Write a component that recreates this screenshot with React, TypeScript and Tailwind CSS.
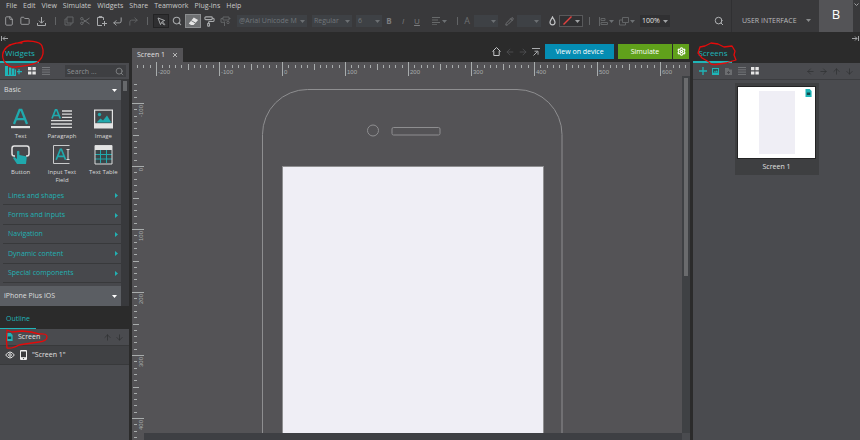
import { useLayoutEffect, useRef, useState } from "react";
import type { ReactNode } from "react";
import {
  ArrowDown,
  ArrowLeft,
  ArrowRight,
  ArrowUp,
  CornerDownLeft,
  CornerUpRight,
  File,
  Folder,
  PaintRoller,
  Pencil,
  Search,
  Settings,
} from "lucide-react";

const TEAL = "#1fb5b8";

function Tool({ label, className = "w-4 text-[#a9abad]", children }: { label: string; className?: string; children: ReactNode }) {
  return (
    <button type="button" aria-label={label} className={`flex h-[14px] shrink-0 items-center justify-center ${className}`}>
      {children}
    </button>
  );
}

function Divider({ className = "w-3" }: { className?: string }) {
  return (
    <span className={`flex shrink-0 justify-center ${className}`}>
      <span className="h-2 w-px bg-[#626466]" />
    </span>
  );
}

function Caret({ className = "text-[#6c7073]" }: { className?: string }) {
  return (
    <svg width="5" height="3" viewBox="0 0 5 3" className={`shrink-0 ${className}`}>
      <path d="M0 0h5L2.5 3z" fill="currentColor" />
    </svg>
  );
}

function Picker({ label, value, className, caret }: { label: string; value: string; className: string; caret?: string }) {
  return (
    <span className={`relative flex h-3 shrink-0 items-center ${className}`}>
      <select aria-label={label} className="h-3 w-full appearance-none bg-transparent pl-0.5 text-[7px] leading-3 outline-none">
        <option>{value}</option>
      </select>
      <span className="pointer-events-none absolute inset-y-0 right-[2px] flex items-center">
        <Caret className={caret} />
      </span>
    </span>
  );
}

function CopyIcon() {
  return (
    <svg width="10" height="10" viewBox="0 0 10 10" fill="none" stroke="currentColor">
      <path d="M3 1h6v6H3zM3 3H1v6h6V7" />
    </svg>
  );
}

function LinesIcon() {
  return (
    <svg width="8" height="8" viewBox="0 0 8 8" stroke="currentColor">
      <path d="M0 .5h8M0 2.8h8M0 5.1h8M0 7.4h8" strokeWidth=".9" />
    </svg>
  );
}

function GridIcon() {
  return (
    <svg width="8" height="8" viewBox="0 0 8 8" fill="currentColor">
      <path d="M0 0h3.4v3.2H0zM4.4 0h3.4v3.2H4.4zM0 4.4h3.4v3.2H0zM4.4 4.4h3.4v3.2H4.4z" />
    </svg>
  );
}

function ScreenFileIcon() {
  return (
    <svg width="7" height="8" viewBox="0 0 7 8">
      <path d="M.5 0h4.2L6.6 2v6H.5z" fill={TEAL} />
      <path d="M1.8 3.5h3.4V6H1.8z" fill="#15494c" />
    </svg>
  );
}

const menus = ["File", "Edit", "View", "Simulate", "Widgets", "Share", "Teamwork", "Plug-ins", "Help"];

function Header() {
  return (
    <header className="flex h-8 shrink-0 bg-[#39393b]">
      <div className="min-w-0 flex-1">
        <nav className="flex h-3 items-center gap-1.5 pl-1.5 leading-3 text-[#c9c9c9]">
          {menus.map((m) => (
            <button key={m} type="button">
              {m}
            </button>
          ))}
        </nav>
        <div className="flex h-[18px] items-center pl-px">
          <Tool label="New"><File size={10} /></Tool>
          <Tool label="Open"><Folder size={10} /></Tool>
          <Tool label="Save">
            <svg width="9" height="9" viewBox="0 0 9 9" fill="none" stroke="currentColor">
              <path d="M4.5 0v6M2 3.7l2.5 2.5L7 3.7M.5 6v2.5h8V6" />
            </svg>
          </Tool>
          <Divider />
          <Tool label="Copy" className="w-4 text-[#626466]"><CopyIcon /></Tool>
          <Tool label="Cut" className="w-4 text-[#6c6e70]">
            <svg width="10" height="8" viewBox="0 0 10 8" fill="none" stroke="currentColor">
              <path d="M9.500 1L3 5.500M9.500 7L3 2.500" />
              <circle cx="1.800" cy="1.700" r="1.200" />
              <circle cx="1.800" cy="6.300" r="1.200" />
            </svg>
          </Tool>
          <Tool label="Paste">
            <svg width="11" height="10" viewBox="0 0 11 10" fill="none" stroke="currentColor">
              <path d="M7.5 4V1.5h-6v8H6M3 1.5V.6h3v.9M8.5 5v5M6 7.5h5" />
            </svg>
          </Tool>
          <Tool label="Undo"><CornerDownLeft size={11} /></Tool>
          <Tool label="Redo" className="w-4 text-[#626466]"><CornerUpRight size={11} /></Tool>
          <Divider />
          <Tool label="Select" className="w-4 border border-[#232324] bg-[#2f2f31] text-[#a9abad]">
            <svg width="9" height="9" viewBox="0 0 9 9" fill="none" stroke="currentColor">
              <path d="M1 1l6.6 2.5-2.4 1L7.8 7.500 7.200 8 4.700 5.300 3.500 7.600z" />
            </svg>
          </Tool>
          <Tool label="Zoom"><Search size={10} strokeWidth={2.5} /></Tool>
          <Tool label="Eraser" className="w-4 border border-[#8b8d8f] bg-[#6e7072]">
            <svg width="11" height="9" viewBox="0 0 11 9">
              <path d="M5.800.5l4.300 2.600-4.500 5H3L.8 6.500z" fill="#e6e6e6" />
              <path d="M3.200 3.600l4.400 2.500" stroke="#77797b" />
            </svg>
          </Tool>
          <Tool label="Copy style"><PaintRoller size={11} strokeWidth={2.4} /></Tool>
          <Tool label="Paste style" className="w-4 text-[#626466]">
            <svg width="11" height="11" viewBox="0 0 11 11" fill="none" stroke="currentColor">
              <path d="M3 1h6v3H3zM3 2.500H1v3.800h3.500M9 2.500h1.500M4.500 5.500v4.500" />
              <circle cx="8" cy="6.500" r="1.200" />
            </svg>
          </Tool>
          <Picker label="Font" value="@Arial Unicode M" className="ml-1 w-[70px] bg-[#3e4145] text-[#72777b]" />
          <Picker label="Font style" value="Regular" className="ml-[5px] w-10 bg-[#3e4145] text-[#72777b]" />
          <Picker label="Font size" value="6" className="ml-1 w-[26px] bg-[#3e4145] text-[#72777b]" />
          <Tool label="Bold" className="w-[14px] text-[8px] font-bold text-[#7b7d7f]">B</Tool>
          <Tool label="Italic" className="w-[14px] text-[8px] italic text-[#7b7d7f]">I</Tool>
          <Tool label="Underline" className="w-[14px] text-[8px] underline text-[#7b7d7f]">U</Tool>
          <Tool label="Align text" className="ml-[7px] w-4 gap-0.5 text-[#6d6f71]">
            <svg width="8" height="8" viewBox="0 0 8 8" stroke="currentColor"><path d="M0 .5h8M0 3h6M0 5.500h8M0 7.800h5" strokeWidth=".9" /></svg>
            <Caret />
          </Tool>
          <Divider className="ml-[5px] w-[10px]" />
          <Tool label="Text colour" className="w-[10px] text-[9px] text-[#6d6f71]">A</Tool>
          <Picker label="Text colour value" value="" className="ml-0.5 w-6 bg-[#3e4145]" />
          <Tool label="Line colour" className="ml-1 w-[14px] text-[#737577]"><Pencil size={9} strokeWidth={2.5} /></Tool>
          <Picker label="Line colour value" value="" className="ml-px w-6 bg-[#3e4145]" />
          <Tool label="Fill colour" className="ml-1 w-[14px] text-[#c2c4c6]">
            <svg width="7" height="10" viewBox="0 0 7 10" fill="none" stroke="currentColor" strokeWidth="1.200">
              <path d="M3.500 1C2.500 3.200 1 4.500 1 6.300a2.500 2.500 0 0 0 5 0C6 4.500 4.500 3.200 3.500 1z" />
            </svg>
          </Tool>
          <span className="relative flex shrink-0">
            <Picker label="Fill colour value" value="" className="w-6 border border-[#58595b] bg-[#303032]" caret="text-[#a0a2a4]" />
            <svg width="9" height="9" viewBox="0 0 9 9" className="pointer-events-none absolute left-[4px] top-[1px]">
              <path d="M.5 8.500l8-8" stroke="#e2413f" strokeWidth="1.400" />
            </svg>
          </span>
          <Divider />
          <Tool label="Align" className="ml-0.5 w-[18px] gap-px text-[#626466]">
            <svg width="9" height="9" viewBox="0 0 9 9" fill="none" stroke="currentColor"><path d="M.5 0v9M2 1.500h4v2H2zM2 5.500h6.500v2H2z" /></svg>
            <Caret />
          </Tool>
          <Tool label="Arrange" className="ml-1 w-4 gap-px text-[#626466]">
            <svg width="10" height="9" viewBox="0 0 10 9" fill="none" stroke="currentColor"><path d="M3.500.5h6v5h-6zM3.500 3h-3v5h6V5.500" /></svg>
            <Caret />
          </Tool>
          <Picker label="Zoom level" value="100%" className="ml-[5px] w-[30px] bg-[#303032] text-[#e4e4e4]" caret="text-[#a0a2a4]" />
          <span className="flex-1" />
          <Tool label="Search" className="mr-1 w-4 text-[#b0b2b4]"><Search size={10} strokeWidth={2.4} /></Tool>
        </div>
      </div>
      <button type="button" className="flex w-[88px] shrink-0 items-center justify-between border-l border-[#303032] pl-[10px] pr-2 pt-[9px] text-[#b9bbbd]">
        USER INTERFACE
        <Caret className="text-[#8a8c8e]" />
      </button>
      <button type="button" className="w-[34px] shrink-0 bg-[#545457] pb-1 text-[13px] text-white">B</button>
      <button type="button" aria-label="More" className="flex w-[7px] shrink-0 justify-center pt-[3px] text-[#a0a2a4]">
        <svg width="5" height="4" viewBox="0 0 5 4" fill="none" stroke="currentColor"><path d="M.5.5l2 2 2-2" /></svg>
      </button>
    </header>
  );
}

function Scribble({ d, className }: { d: string; className: string }) {
  return (
    <svg width="50" height="30" viewBox="0 0 50 30" className={`pointer-events-none absolute z-10 ${className}`}>
      <path d={d} fill="none" stroke="#e30b0b" strokeWidth="1.300" strokeLinejoin="round" strokeLinecap="round" />
    </svg>
  );
}

const widgetIcons: { label: string; art: ReactNode }[] = [
  {
    label: "Text",
    art: (
      <>
        <path d="M4 16L9.600 1.800h1.800L17 16M6 11.200h9" fill="none" stroke="#20a9ad" strokeWidth="2.300" />
        <path d="M1 18h19v2.200H1z" fill="#e3e3e3" />
      </>
    ),
  },
  {
    label: "Paragraph",
    art: (
      <>
        <path d="M1 10.500L4.500 1.800h1.200L9.200 10.500M2.500 7.500h5.200" fill="none" stroke="#20a9ad" strokeWidth="1.700" />
        <path d="M11 3h10M11 6.200h10M11 9.400h10M0 12.700h21M0 16h21M0 19.300h21" stroke="#dadada" strokeWidth="1.300" />
      </>
    ),
  },
  {
    label: "Image",
    art: (
      <>
        <path d="M1 1.500h19v19H1z" fill="#e3e3e3" />
        <path d="M2.200 2.700h16.600v12.500H2.200z" fill="#444649" />
        <path d="M3.500 14.500l4-4 2.500 2 4-5 4.300 7z" fill="#20a9ad" />
        <circle cx="6.500" cy="6.500" r="1.700" fill="#20a9ad" />
      </>
    ),
  },
  {
    label: "Button",
    art: (
      <>
        <path d="M5 12H4.200Q2 12 2 9.700V4.300Q2 2 4.200 2h12.600Q19 2 19 4.300v5.400q0 2.300-2.200 2.300H16" fill="none" stroke="#e3e3e3" strokeWidth="1.500" />
        <path d="M7 20l-4-6 1.200-1L7 15V7.500q1.200-1.600 2.400 0V11l6.300 1.200q1.100.3 1 1.500L16 20z" fill="#20a9ad" />
      </>
    ),
  },
  {
    label: "Input Text Field",
    art: (
      <>
        <path d="M18.500 1.500h-16v18h16" fill="none" stroke="#c9cacb" />
        <path d="M5.200 15.800L9.400 5.300h1l4.200 10.500M7 12.300h6" fill="none" stroke="#20a9ad" strokeWidth="1.700" />
        <path d="M15.500 5.500h3M15.500 15.500h3M17 5.500v10" stroke="#dadada" />
      </>
    ),
  },
  {
    label: "Text Table",
    art: (
      <>
        <path d="M2 6h17v13.500H2z" fill="#3a4548" />
        <path d="M7.500 6v13M13.500 6v13M2 10.500h17M2 15h17" stroke="#20a9ad" />
        <path d="M2 1.500h17V20H2z" fill="none" stroke="#dadada" />
        <path d="M2 2h17v4H2z" fill="#e3e3e3" />
      </>
    ),
  },
];

const categories = ["Lines and shapes", "Forms and inputs", "Navigation", "Dynamic content", "Special components"];

function SectionBar({ title, className = "" }: { title: string; className?: string }) {
  return (
    <button type="button" className={`flex h-5 w-full items-center justify-between bg-[#5b5e63] pl-1 pr-1 text-[#dededf] ${className}`}>
      {title}
      <Caret className="text-white" />
    </button>
  );
}

function LeftPanel() {
  return (
    <aside className="mr-[3px] flex w-[129px] shrink-0 flex-col">
      <div className="relative flex h-[19px] shrink-0">
        <button type="button" className="w-[39px] border-b-2 border-[#1fb5b8] pl-px text-[8px] text-[#1fb5b8]">Widgets</button>
        <Scribble className="-top-[5px] left-0" d="M22 4C16 3 8 6 5 10S2 18 4 22s7 7 12 6 18-1 23-6 5-10 3-15S27 1 21 3s-9 2-12 3" />
      </div>
      <div className="flex h-[17px] shrink-0 items-center border-b border-[#38393b] bg-[#4a4b4f]">
        <Tool label="Add library" className="ml-1 w-[18px]">
          <svg width="17" height="10" viewBox="0 0 17 10" fill={TEAL}>
            <path d="M0 0h3v10H0zM4 1.500h2.400V10H4zM7 2.500h2.400V10H7zM10 3.500h1V10h-1zM0 8.800h11V10H0zM13.400 3h1.200v2H17v1.200h-2.400v2h-1.200v-2H12V5h1.400z" />
          </svg>
        </Tool>
        <Tool label="Icon view" className="ml-0.5 w-4 text-[#e6e6e6]"><GridIcon /></Tool>
        <Tool label="List view" className="w-3 text-[#7b7d80]"><LinesIcon /></Tool>
        <label className="ml-auto mr-[3px] flex h-3 w-[61px] items-center bg-[#3e3f42] px-0.5 text-[#8f9193]">
          <input aria-label="Search widgets" placeholder="Search ..." className="h-3 w-full min-w-0 bg-transparent text-[7px] outline-none placeholder:text-[#8f9193]" />
          <Search size={9} className="shrink-0" />
        </label>
      </div>
      <div className="flex shrink-0 border-b border-[#2b2b2b] bg-[#38393c]">
        <div className="min-w-0 flex-1 bg-[#47484c]">
          <SectionBar title="Basic" />
          <div className="-mr-[3px] grid grid-cols-3 gap-y-1 pt-2">
            {widgetIcons.map((w) => (
              <button key={w.label} type="button" className="flex flex-col items-center gap-0.5 text-[6px] leading-[8px] text-[#dadada]">
                <svg width="21" height="22" viewBox="0 0 21 22">{w.art}</svg>
                <span className="w-9">{w.label}</span>
              </button>
            ))}
          </div>
          <div className="mt-0.5 grid h-[97px] grid-rows-5 pl-[3px] text-[#22b1b3]">
            {categories.map((c) => (
              <button key={c} type="button" className="flex items-center justify-between border-b border-[#38393b] pl-[5px] pr-[3px] pt-px">
                {c}
                <svg width="3" height="5" viewBox="0 0 3 5"><path d="M0 0l3 2.500L0 5z" fill="currentColor" /></svg>
              </button>
            ))}
          </div>
          <SectionBar title="iPhone Plus iOS" className="mt-[3px]" />
        </div>
        <div className="w-2 px-[2px] pt-px">
          <div className="h-[10px] bg-[#66686b]" />
        </div>
      </div>
      <div className="flex h-[22px] shrink-0">
        <button type="button" className="w-9 border-b border-[#1fb5b8] pt-0.5 text-[#1fb5b8]">Outline</button>
      </div>
      <div className="flex-1 bg-[#4a4b4f] text-[#e0e0e0]">
        <div className="relative flex h-[17px] items-center border-b border-[#38393b] pl-1.5 pr-1">
          <ScreenFileIcon />
          <span className="ml-[5px] flex-1">Screen</span>
          <Tool label="Move up" className="w-3 text-[#2f3032]"><ArrowUp size={9} /></Tool>
          <Tool label="Move down" className="w-3 text-[#2f3032]"><ArrowDown size={9} /></Tool>
          <Scribble className="left-0 top-0" d="M7 1l5 2 10-1 9 1 8 2q8-1 8 3 0 4-8 5l-14 2-6 1q-7 4-12 3-1-8 0-18" />
        </div>
        <div className="flex h-[19px] items-center border-b border-[#38393b] bg-[#404144] pl-[5px]">
          <Tool label="Toggle visibility" className="w-[10px]">
            <svg width="10" height="8" viewBox="0 0 10 8" fill="none" stroke="#e6e6e6">
              <path d="M.7 4Q5-2 9.300 4 5 10 .7 4z" />
              <circle cx="5" cy="4" r="1.300" />
            </svg>
          </Tool>
          <svg width="7" height="10" viewBox="0 0 7 10" className="ml-[5px]">
            <rect width="7" height="10" rx="1" fill="#f0f0f0" />
            <path d="M1 1.500h5v5.700H1z" fill="#3b3c3e" />
            <circle cx="3.500" cy="8.600" r=".7" fill="#3b3c3e" />
          </svg>
          <span className="ml-[5px]">"Screen 1"</span>
        </div>
      </div>
    </aside>
  );
}

const STEP = 6.3;
const rulerColor = "#a8acac";

function tickSpan(n: number) {
  if (n % 10 === 0) return [0, 14];
  if (n % 5 === 0) return [2, 8];
  return [3, 6];
}

function useSize() {
  const ref = useRef<SVGSVGElement>(null);
  const [size, setSize] = useState({ width: 0, height: 0 });
  useLayoutEffect(() => {
    const el = ref.current;
    if (!el) return;
    const measure = () => {
      const box = el.getBoundingClientRect();
      setSize({ width: box.width, height: box.height });
    };
    measure();
    const observer = new ResizeObserver(measure);
    observer.observe(el);
    return () => observer.disconnect();
  }, []);
  return { ref, size };
}

function marks(origin: number, length: number) {
  const first = Math.ceil((3 - origin) / STEP);
  const last = Math.floor((length - 3 - origin) / STEP);
  return Array.from({ length: Math.max(0, last - first + 1) }, (_, i) => {
    const n = first + i;
    return { n, at: Math.round(origin + n * STEP) };
  });
}

function TopRuler() {
  const { ref, size } = useSize();
  const ticks = marks(150, size.width);
  return (
    <svg ref={ref} className="h-[14px] w-full shrink-0" fontFamily="Liberation Sans, sans-serif" fontSize="6" fill={rulerColor}>
      {ticks.map(({ n, at }) => {
        const [a, b] = tickSpan(n);
        return <rect key={n} x={at} y={a} width="1" height={b - a} />;
      })}
      {ticks.filter(({ n, at }) => n % 10 === 0 && at < size.width - 14).map(({ n, at }) => (
        <text key={n} x={at + 2} y="12">{n * 10}</text>
      ))}
    </svg>
  );
}

function SideRuler() {
  const { ref, size } = useSize();
  const ticks = marks(90, size.height);
  return (
    <svg ref={ref} className="h-full w-3 shrink-0" fontFamily="Liberation Sans, sans-serif" fontSize="6" fill={rulerColor}>
      {ticks.map(({ n, at }) => {
        const [a, b] = tickSpan(n);
        return <rect key={n} x={a === 0 ? 0 : a - 1} y={at} width={b - a} height="1" />;
      })}
      {ticks.filter(({ n, at }) => n % 10 === 0 && at < size.height - 13).map(({ n, at }) => (
        <text key={n} textAnchor="end" transform={`translate(11 ${at + 2}) rotate(-90)`}>{n * 10}</text>
      ))}
    </svg>
  );
}

function Editor() {
  return (
    <main className="flex min-w-0 flex-1 flex-col">
      <div className="flex h-[18px] shrink-0 items-start">
        <div className="mt-1 flex h-[14px] w-[51px] items-center justify-between bg-[#545356] pl-[5px] pr-1.5 text-[#e0e0e0]">
          <span className="whitespace-nowrap">Screen 1</span>
          <button type="button" aria-label="Close tab">
            <svg width="4" height="4" viewBox="0 0 4 4" stroke="#b5b5b5"><path d="M0 0l4 4M4 0L0 4" /></svg>
          </button>
        </div>
        <div className="ml-auto flex items-center text-[#4f5153]">
          <Tool label="Home" className="w-[13px] text-[#c2c4c6]">
            <svg width="9" height="9" viewBox="0 0 9 9" fill="none" stroke="currentColor"><path d="M.5 4.500l4-4 4 4M1.800 4v4.500h5.400V4" /></svg>
          </Tool>
          <Tool label="Back" className="w-[13px]"><ArrowLeft size={10} /></Tool>
          <Tool label="Forward" className="w-[13px]"><ArrowRight size={10} /></Tool>
          <Tool label="Go to top" className="w-[14px] text-[#a9abad]">
            <svg width="8" height="8" viewBox="0 0 8 8" fill="none" stroke="currentColor"><path d="M0 .5h8M1.500 7.500l4-4M2.500 3.200h3.500v3.500" /></svg>
          </Tool>
          <button type="button" className="ml-0.5 h-[15px] w-[69px] bg-[#058db3] text-white">View on device</button>
          <button type="button" className="ml-1 h-[15px] w-[54px] bg-[#60a11b] text-white">Simulate</button>
          <button type="button" aria-label="Simulation settings" className="ml-px mr-px flex h-[15px] w-4 items-center justify-center bg-[#60a11b] text-white">
            <Settings size={9} strokeWidth={3} />
          </button>
        </div>
      </div>
      <div className="flex min-h-0 flex-1 flex-col bg-[#545356]">
        <TopRuler />
        <div className="flex min-h-0 flex-1">
          <SideRuler />
          <div className="flex min-w-0 flex-1 flex-col">
            <svg className="min-h-0 w-full flex-1" fill="none" stroke="#8e8e90">
              <rect x="118.500" y="13.500" width="299.500" height="620" rx="45" />
              <circle cx="229" cy="54.500" r="5.500" />
              <rect x="248" y="51.500" width="48" height="7.500" rx="1.500" />
              <rect x="138.500" y="90.500" width="261" height="464" fill="#efeef5" />
            </svg>
            <div className="h-[7px] shrink-0 bg-[#3e3f43]" />
          </div>
          <div className="flex w-2 flex-col bg-[#3f4144]">
            <div className="flex-1 px-[2px] pt-0.5">
              <div className="h-[198px] bg-[#6a6b6d]" />
            </div>
            <div className="h-[7px] bg-[#4a4b4f]" />
          </div>
        </div>
      </div>
    </main>
  );
}

function RightPanel() {
  return (
    <aside className="ml-[3px] flex w-[167px] shrink-0 flex-col">
      <div className="relative flex h-[19px] shrink-0">
        <button type="button" className="w-[39px] border-b-2 border-[#1fb5b8] pl-px text-[8px] text-[#1fb5b8]">Screens</button>
        <Scribble className="-top-[3px] left-0" d="M6 9l1-3 5-1 6-3 7 1 6 3 8-1 3 5-1 4 2 5-7 2-3 1-7 1q-8 2-10-2l-7-4-4-5 1-3" />
      </div>
      <div className="flex h-[17px] shrink-0 items-center border-b border-[#3c3d40] bg-[#4a4b4f] pl-[3px] pr-1 text-[#303133]">
        <Tool label="Add screen" className="w-[13px]">
          <svg width="8" height="8" viewBox="0 0 8 8" stroke={TEAL} strokeWidth="1.300"><path d="M4 0v8M0 4h8" /></svg>
        </Tool>
        <Tool label="Add image screen" className="w-[13px]">
          <svg width="7" height="7" viewBox="0 0 7 7">
            <path d="M0 0h7v7H0z" fill={TEAL} />
            <path d="M1 1h5v3.800H1z" fill="#2a5557" />
            <path d="M1.300 4.600l1.500-1.700 1 .9 1-1.500 1.200 2.300z" fill={TEAL} />
          </svg>
        </Tool>
        <Tool label="Add folder" className="w-[13px] text-[#6b6d70]">
          <svg width="7" height="7" viewBox="0 0 7 7"><path d="M0 0h3.500l1 1.500H7V7H0z" fill="currentColor" /><path d="M3.500 3v3M2 4.500h3" stroke="#4a4b4f" /></svg>
        </Tool>
        <Tool label="List view" className="w-[13px] text-[#77797c]"><LinesIcon /></Tool>
        <Tool label="Grid view" className="w-[14px] text-[#e6e6e6]"><GridIcon /></Tool>
        <span className="flex-1" />
        <Tool label="Move left" className="w-[13px]"><ArrowLeft size={9} /></Tool>
        <Tool label="Move right" className="w-[13px]"><ArrowRight size={9} /></Tool>
        <Tool label="Move up" className="w-[13px]"><ArrowUp size={9} /></Tool>
        <Tool label="Move down" className="w-[13px]"><ArrowDown size={9} /></Tool>
      </div>
      <div className="flex flex-1 items-start justify-center bg-[#4a4b4f] pt-[3px]">
        <button type="button" className="flex w-[84px] flex-col items-center bg-[#3e3f41] pt-[3px] text-[#e0e0e0]">
          <span className="relative flex h-[73px] w-[79px] justify-center border border-[#232324] bg-white py-1">
            <span className="w-9 bg-[#efeef5]" />
            <span className="absolute right-[3px] top-[2px]">
              <ScreenFileIcon />
            </span>
          </span>
          <span className="leading-4">Screen 1</span>
        </button>
      </div>
    </aside>
  );
}

export default function App() {
  return (
    <div className="flex h-screen flex-col overflow-hidden bg-[#2b2b2b] font-['Open_Sans',sans-serif] text-[7px] leading-[10px]">
      <Header />
      <div className="flex h-3 shrink-0 items-center justify-between px-px text-[#a0a2a4]">
        <button type="button" aria-label="Collapse left panel">
          <svg width="7" height="5" viewBox="0 0 7 5" fill="none" stroke="currentColor"><path d="M.5 0v5M2 2.500h5M4 .5l-2 2 2 2" /></svg>
        </button>
        <button type="button" aria-label="Collapse right panel">
          <svg width="7" height="5" viewBox="0 0 7 5" fill="none" stroke="currentColor"><path d="M6.500 0v5M0 2.500h5M3 .5l2 2-2 2" /></svg>
        </button>
      </div>
      <div className="flex min-h-0 flex-1">
        <LeftPanel />
        <Editor />
        <RightPanel />
      </div>
    </div>
  );
}
